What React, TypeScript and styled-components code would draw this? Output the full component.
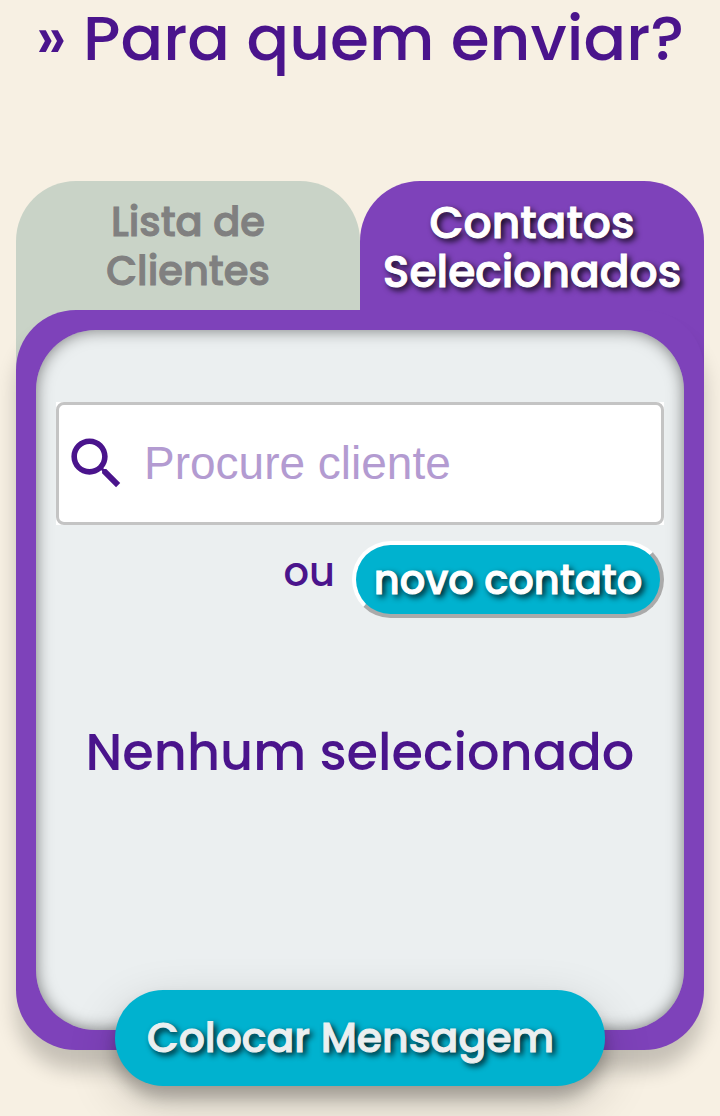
import React, { useState } from "react";
import styled, { createGlobalStyle, css } from "styled-components";

const GlobalStyle = createGlobalStyle`
  *, *::before, *::after { box-sizing: border-box; }
  body {
    margin: 0;
    background: #f7f0e3;
    color: #4a148c;
    font-family: Poppins, Inter, "Open Sans", sans-serif;
    font-weight: 500;
  }
  button { font-family: inherit; cursor: pointer; }
`;

const raisedText = css`
  text-shadow: 3px 3px 6px #000;
`;

const Page = styled.main`
  display: flex;
  flex-direction: column;
  padding: 0 16px 30px;
`;

const Title = styled.h1`
  margin: 0 0 105px;
  font-size: 63px;
  line-height: 76px;
  font-weight: 500;
  text-align: center;
  white-space: nowrap;
`;

const Tabs = styled.div`
  display: grid;
  grid-template-columns: 1fr 1fr;
`;

const Tab = styled.button<{ $active: boolean }>`
  height: 229px;
  margin-bottom: -100px;
  padding: 17px 20px 115px;
  border: 0;
  border-radius: 60px 60px 0 0;
  background: #c9d3c7;
  color: #808080;
  font-size: 40px;
  line-height: 49px;
  font-weight: 500;
  -webkit-text-stroke: 1px;
  ${({ $active }) =>
    $active &&
    css`
      background: #7e42ba;
      color: #fff;
      font-size: 44px;
      ${raisedText}
    `}
`;

const Frame = styled.section`
  position: relative;
  padding: 20px;
  border-radius: 60px;
  background: #7e42ba;
  box-shadow: 0 20px 20px rgba(0, 0, 0, 0.2);
`;

const Panel = styled.div`
  display: flex;
  flex-direction: column;
  min-height: 700px;
  padding: 72px 20px 0;
  border-radius: 60px;
  background: #ebeff0;
  box-shadow: inset 0 0 16px rgba(0, 0, 0, 0.5);
`;

const SearchBack = styled.div`
  background: #fff;
`;

const SearchField = styled.label`
  display: flex;
  align-items: center;
  gap: 14px;
  height: 123px;
  padding: 0 4px;
  border: 3px solid #c4c4c4;
  border-radius: 8px;
`;

const SearchIcon = styled.svg`
  flex: none;
  width: 67px;
  height: 67px;
  fill: #4a148c;
`;

const SearchInput = styled.input`
  flex: 1;
  min-width: 0;
  padding: 0 0 2px;
  border: 0;
  outline: 0;
  background: transparent;
  color: #4a148c;
  font-family: "Liberation Sans", Arial, sans-serif;
  font-size: 46px;
  line-height: 56px;
  &::placeholder {
    color: #b39bd1;
    opacity: 1;
  }
`;

const NewContact = styled.div`
  display: flex;
  justify-content: flex-end;
  align-items: flex-start;
  gap: 17px;
  margin-top: 16px;
  font-size: 40px;
  line-height: 62px;
`;

const NewContactButton = styled.button`
  width: 312px;
  height: 77px;
  padding: 0;
  border: 4px solid;
  border-color: #fff #aaa #aaa #fff;
  border-radius: 40px;
  background: #00b2cf;
  color: #fff;
  font-size: 40px;
  line-height: 60px;
  font-weight: 500;
  -webkit-text-stroke: 1px;
  ${raisedText}
  white-space: nowrap;
`;

const EmptyText = styled.p`
  margin: 96px 0 0;
  font-size: 51px;
  line-height: 76px;
  text-align: center;
  white-space: nowrap;
`;

const SubmitButton = styled.button`
  position: relative;
  align-self: center;
  width: 490px;
  height: 96px;
  margin-top: -60px;
  padding: 0 32px;
  border: 0;
  border-radius: 48px;
  background: #00b2cf;
  color: #ebeff0;
  font-size: 41px;
  line-height: 60px;
  font-weight: 500;
  -webkit-text-stroke: 1px;
  ${raisedText}
  text-align: left;
  white-space: nowrap;
  box-shadow: 0 12px 16px rgba(0, 0, 0, 0.24), 0 17px 50px rgba(0, 0, 0, 0.19);
`;

const tabs = ["Lista de Clientes", "Contatos Selecionados"];

export default function App() {
  const [active, setActive] = useState(1);
  return (
    <>
      <GlobalStyle />
      <Page>
        <Title>» Para quem enviar?</Title>
        <Tabs role="tablist">
          {tabs.map((label, i) => (
            <Tab
              key={label}
              type="button"
              role="tab"
              aria-selected={i === active}
              $active={i === active}
              onClick={() => setActive(i)}
            >
              {label}
            </Tab>
          ))}
        </Tabs>
        <Frame>
          <Panel>
            <SearchBack>
              <SearchField>
                <SearchIcon viewBox="0 0 24 24" aria-hidden="true">
                  <path d="M15.5 14h-.79l-.28-.27C15.41 12.59 16 11.11 16 9.5 16 5.91 13.09 3 9.5 3S3 5.91 3 9.5 5.91 16 9.5 16c1.61 0 3.09-.59 4.23-1.57l.27.28v.79l5 4.99L20.49 19l-4.99-5zm-6 0C7.01 14 5 11.99 5 9.5S7.01 5 9.5 5 14 7.01 14 9.5 11.99 14 9.5 14z" />
                </SearchIcon>
                <SearchInput type="text" placeholder="Procure cliente" aria-label="Procure cliente" />
              </SearchField>
            </SearchBack>
            <NewContact>
              <span>ou</span>
              <NewContactButton type="button">novo contato</NewContactButton>
            </NewContact>
            <EmptyText>Nenhum selecionado</EmptyText>
          </Panel>
        </Frame>
        <SubmitButton type="button">Colocar Mensagem</SubmitButton>
      </Page>
    </>
  );
}
